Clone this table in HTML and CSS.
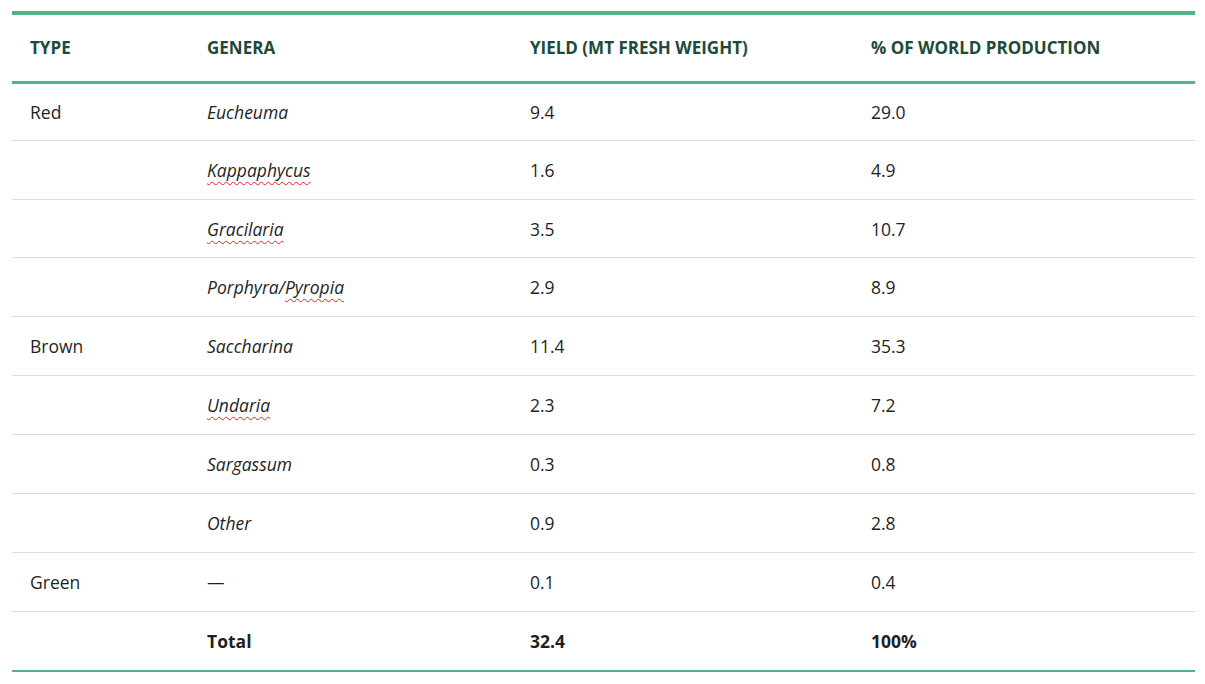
FILE: index.html
```html
<!DOCTYPE html>
<html lang="en">
<head>
<meta charset="utf-8">
<title>Seaweed production</title>
<link rel="stylesheet" href="styles.css">
</head>
<body>
<table class="data">
  <colgroup>
    <col class="c1"><col class="c2"><col class="c3"><col class="c4">
  </colgroup>
  <thead>
    <tr><th>TYPE</th><th>GENERA</th><th>YIELD (MT FRESH WEIGHT)</th><th>% OF WORLD PRODUCTION</th></tr>
  </thead>
  <tbody>
    <tr class="first"><td>Red</td><td class="gen">Eucheuma</td><td>9.4</td><td>29.0</td></tr>
    <tr><td></td><td class="gen"><span class="sp">Kappaphycus</span></td><td>1.6</td><td>4.9</td></tr>
    <tr class="short"><td></td><td class="gen"><span class="sp">Gracilaria</span></td><td>3.5</td><td>10.7</td></tr>
    <tr><td></td><td class="gen">Porphyra/<span class="sp">Pyropia</span></td><td>2.9</td><td>8.9</td></tr>
    <tr><td>Brown</td><td class="gen">Saccharina</td><td>11.4</td><td>35.3</td></tr>
    <tr><td></td><td class="gen"><span class="sp">Undaria</span></td><td>2.3</td><td>7.2</td></tr>
    <tr><td></td><td class="gen">Sargassum</td><td>0.3</td><td>0.8</td></tr>
    <tr><td></td><td class="gen">Other</td><td>0.9</td><td>2.8</td></tr>
    <tr><td>Green</td><td>—</td><td>0.1</td><td>0.4</td></tr>
    <tr class="total"><td></td><td>Total</td><td>32.4</td><td>100%</td></tr>
  </tbody>
</table>
</body>
</html>
```
FILE: styles.css
```css
html, body {
  margin: 0;
  padding: 0;
  background: #ffffff;
}
body {
  padding: 11px 10px 0 12px;
  font-family: "Open Sans", "Noto Sans", "DejaVu Sans", sans-serif;
  font-size: 17.5px;
  color: #1f1f1f;
}
.data {
  width: 1183px;
  border-collapse: collapse;
  table-layout: fixed;
}
.c1 { width: 177px; }
.c2 { width: 323px; }
.c3 { width: 341px; }
.c4 { width: 342px; }
.data th {
  text-align: left;
  font-weight: 700;
  color: #1d4a3b;
  font-size: 17px;
  height: 66px;
  padding: 0 18px;
  border-top: 4px solid #52b386;
  border-bottom: 3px solid #52b386;
  line-height: 22px;
}
.data td {
  height: 58px;
  padding: 0 18px;
  line-height: 22px;
  border-bottom: 1px solid #dcdcdc;
  vertical-align: middle;
}
.data tr.first td {
  height: 56px;
}
.data tr.short td {
  height: 57px;
}
.data td.gen {
  font-style: italic;
}
.sp {
  text-decoration: underline wavy #e8202a;
  text-decoration-thickness: 1px;
  text-underline-offset: 4px;
}
.data tr.total td {
  font-weight: 700;
  border-bottom: 2px solid #52b386;
}
```
